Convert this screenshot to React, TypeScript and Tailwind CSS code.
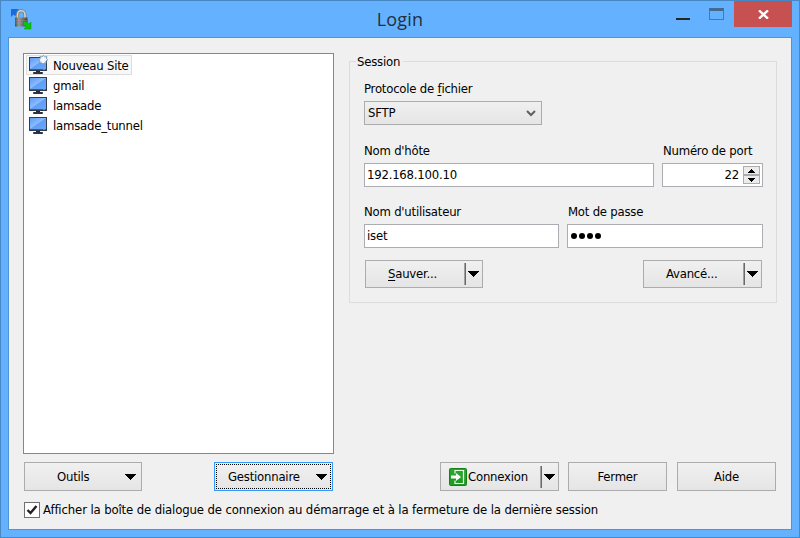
import type { ReactNode } from "react";

function Monitor({ star = false }: { star?: boolean }) {
  return (
    <svg width="20" height="20" viewBox="0 0 20 20" className="block shrink-0">
      <defs>
        <linearGradient id="screen" x1="0" y1="0" x2="1" y2="1">
          <stop offset="0" stopColor="#5c9cf5" />
          <stop offset="0.48" stopColor="#8cbbfb" />
          <stop offset="0.52" stopColor="#5f9ff8" />
          <stop offset="1" stopColor="#68a6ff" />
        </linearGradient>
      </defs>
      <path d="M1 2h18v14H1z" fill="#343d4c" />
      <path d="M2 3h16v11H2z" fill="url(#screen)" />
      <path d="M2 14h16v1H2z" fill="#46597a" />
      <path d="M15 14h2v1h-2z" fill="#20d020" />
      <path d="M8 16h4v1H8z" fill="#252a33" />
      <path d="M5.500 17.500h9v1h-9z" fill="#4e6079" stroke="#2c3442" />
      {star && (
        <path
          d="M15.400.3l1.200 1.800 2.300-.8-.4 2.300 1.300 1.300-1.900 1.100.2 2.200-1.900-.3-1.300 1.400-1.100-1.500-2.200.2.500-2.100-1.400-1.300 1.700-1.100-.5-2.200 2.200.7z"
          fill="#f4faff"
          stroke="#7592ad"
          strokeWidth=".8"
        />
      )}
    </svg>
  );
}

function AppIcon() {
  return (
    <svg width="22" height="22" viewBox="0 0 22 22" className="block">
      <defs>
        <linearGradient id="lock" x1="0" y1="0" x2="1" y2="0">
          <stop offset="0" stopColor="#4a4a4a" />
          <stop offset=".3" stopColor="#989898" />
          <stop offset=".65" stopColor="#6a6a6a" />
          <stop offset="1" stopColor="#3a3a3a" />
        </linearGradient>
      </defs>
      <path d="M1 1h8L6.500 3.500 8 5 5 8 3.500 6.500 1 9z" fill="#176be0" />
      <path d="M7.500 10V6.500a3.500 3.500 0 0 1 7.500 0V10" fill="none" stroke="#777" strokeWidth="3" />
      <path d="M7.500 10V6.500a3.500 3.500 0 0 1 7.500 0V10" fill="none" stroke="#d8d4d0" strokeWidth="1.600" />
      <path d="M5 9.500h12.500v9H5z" fill="url(#lock)" />
      <path d="M5 10h12.500M5 12.500h12M5 15h12" stroke="#a2a2a2" strokeWidth=".6" opacity=".6" />
      <path d="M13.500 13.500h3l2.500 2.500 2-2v7h-7l2-2-2.500-2.500z" fill="#09c510" stroke="#079b0c" strokeWidth=".5" />
    </svg>
  );
}

function Down() {
  return (
    <svg width="11" height="6" viewBox="0 0 11 6" shapeRendering="crispEdges" className="block">
      <path d="M0 0h11v1h-1v1H9v1H8v1H7v1H6v1H5V5H4V4H3V3H2V2H1V1H0z" fill="#000" />
    </svg>
  );
}

function Spin({ up = false }: { up?: boolean }) {
  return (
    <div className="flex h-[9px] w-[17px] items-center justify-center border border-[#acacac] bg-[#ececec]">
      <svg width="7" height="4" viewBox="0 0 7 4" shapeRendering="crispEdges" className={up ? "block rotate-180" : "block"}>
        <path d="M0 0h7v1H6v1H5v1H4v1H3V3H2V2H1V1H0z" />
      </svg>
    </div>
  );
}

function Button({ className, text, children, drop, split }: { className: string; text: string; children: ReactNode; drop?: string; split?: boolean }) {
  return (
    <button className={`flex shrink-0 items-center border border-[#acacac] bg-linear-to-b from-[#f0f0f0] to-[#e5e5e5] text-left ${className}`}>
      <span className={`flex shrink-0 items-center ${text}`}>{children}</span>
      {split && <span className="h-[22px] w-[2px] shrink-0 border-r border-[#696969] bg-[#a0a0a0]" />}
      {drop && <span className={drop}><Down /></span>}
    </button>
  );
}

const sites = ["gmail", "lamsade", "lamsade_tunnel"];

export default function App() {
  return (
    <div className="flex h-[538px] w-[800px] flex-col border border-[#4787c2] bg-[#64b2ff] font-['DejaVu_Sans_Condensed','DejaVu_Sans',sans-serif] text-[13px] leading-[16px] tracking-[-0.22px] text-black [font-stretch:condensed]">
      <header className="flex h-[36px] shrink-0">
        <div className="w-[220px] pt-[7px] pl-[9px]"><AppIcon /></div>
        <h1 className="w-[358px] pt-[6px] text-center font-['Open_Sans','Noto_Sans',sans-serif] text-[18px] leading-[24px] tracking-[0.2px] text-[#22303c] [font-stretch:normal]">Login</h1>
        <div className="flex grow justify-end pr-[7px]">
          <span className="mt-[17px] mr-[19px] h-[2px] w-[14px] bg-[#252525]" />
          <span className="mt-[7px] mr-[10px] h-[12px] w-[15px] border border-t-3 border-[#447aac] border-t-[#436b91]" />
          <span className="flex h-[26px] w-[58px] items-center justify-center bg-[#c75050]">
            <svg width="11" height="9" viewBox="0 0 11 9"><path d="M1 .3l9 8.400M10 .3l-9 8.400" stroke="#fff" strokeWidth="2.300" /></svg>
          </span>
        </div>
      </header>
      <main className="mx-[7px] h-[493px] border border-[#5094d5] bg-[#f0f0f0] pt-[15px] pl-[14px]">
        <div className="flex gap-[15px]">
          <div className="h-[401px] w-[311px] border border-[#828790] bg-white pt-px pl-[2px]">
            <div className="flex h-[20px] w-[106px] items-center border border-[#dedede] bg-[#f7f7f7] pl-px">
              <Monitor star /><span className="pt-px pl-[5px] whitespace-nowrap">Nouveau Site</span>
            </div>
            {sites.map((site) => (
              <div key={site} className="flex h-[20px] items-center pl-[2px]"><Monitor /><span className="pt-px pl-[5px]">{site}</span></div>
            ))}
          </div>
          <section className="mt-[8px] h-[242px] w-[428px] border border-[#dcdcdc] pl-[14px] whitespace-nowrap">
            <h2 className="-mt-[8px] -ml-[8px] w-[47px] bg-[#f0f0f0] pl-px">Session</h2>
            <div className="pt-[11px]">Protocole de <u className="underline-offset-2">f</u>ichier</div>
            <div className="mt-[4px] flex h-[24px] w-[178px] items-center justify-between border border-[#acacac] bg-linear-to-b from-[#f0f0f0] to-[#e5e5e5] pr-[5px] pl-[3px]">
              SFTP
              <svg width="10" height="7" viewBox="0 0 10 7"><path d="M1 1l4 4 4-4" fill="none" stroke="#606060" strokeWidth="2" /></svg>
            </div>
            <div className="mt-[18px] flex gap-[8px]">
              <div className="w-[290px]"><div>Nom d'hôte</div><div className="mt-[4px] h-[24px] border border-[#abadb3] bg-white pt-[3px] pl-[2px]">192.168.100.10</div></div>
              <div className="w-[101px]">
                <div className="pl-px">Numéro de port</div>
                <div className="mt-[4px] flex h-[24px] items-center justify-end border border-[#abadb3] bg-white pr-[2px]">
                  <span className="pr-[4px]">22</span><div className="flex flex-col"><Spin up /><Spin /></div>
                </div>
              </div>
            </div>
            <div className="mt-[17px] flex gap-[8px]">
              <div className="w-[195px]"><div>Nom d'utilisateur</div><div className="mt-[4px] h-[24px] border border-[#abadb3] bg-white pt-[3px] pl-[2px]">iset</div></div>
              <div className="w-[196px]">
                <div className="pl-px">Mot de passe</div>
                <div className="mt-[4px] flex h-[24px] items-center gap-[2px] border border-[#abadb3] bg-white pl-[3px]">
                  {[0, 1, 2, 3].map((n) => <span key={n} className="size-[6px] rounded-full bg-black" />)}
                </div>
              </div>
            </div>
            <div className="mt-[12px] flex gap-[160px] pl-px">
              <Button className="h-[28px] w-[118px]" text="w-[98px] pl-[22px]" split drop="pl-[2px]"><span><u className="underline-offset-2">S</u>auver...</span></Button>
              <Button className="h-[28px] w-[119px]" text="w-[99px] pl-[22px]" split drop="pl-[2px]">Avancé...</Button>
            </div>
          </section>
        </div>
        <div className="mt-[8px] flex h-[29px] pl-px">
          <Button className="h-[29px] w-[118px]" text="w-[100px] pl-[32px]" drop="pl-0">Outils</Button>
          <button className="ml-[72px] h-[29px] w-[119px] border border-[#3399ff] bg-linear-to-b from-[#f0f0f0] to-[#e5e5e5] p-px">
            <span className="flex h-full items-center justify-between border border-dotted border-black pr-[3px] pl-[11px]"><span>Gestionnaire</span><Down /></span>
          </button>
          <Button className="ml-[107px] h-[29px] w-[119px]" text="w-[99px] pl-[8px]" split drop="pl-[2px]">
            <svg width="18" height="18" viewBox="0 0 18 18" className="mr-px block shrink-0">
              <rect x=".5" y=".5" width="17" height="17" rx="1" fill="#2ba32d" stroke="#168019" />
              <path d="M1 17V9l16 3v5z" fill="#118b14" opacity=".35" />
              <path d="M6 5.500v-3h8.500v13H6v-3" fill="none" stroke="#e4ffe4" strokeWidth="1.200" />
              <path d="M2 7.500h5V5l5 4-5 4v-2.500H2z" fill="#fff" />
            </svg>Connexion
          </Button>
          <Button className="ml-[9px] h-[29px] w-[99px]" text="w-full justify-center">Fermer</Button>
          <Button className="ml-[10px] h-[29px] w-[99px]" text="w-full justify-center">Aide</Button>
        </div>
        <label className="mt-[10px] flex items-center pl-px">
          <span className="flex size-[16px] items-center justify-center border border-[#707070] bg-white">
            <svg width="12" height="10" viewBox="0 0 12 10"><path d="M1.500 5l3 3L10.500 1" fill="none" stroke="#212121" strokeWidth="2.400" /></svg>
          </span>
          <span className="pt-px pl-[3px] tracking-[-0.13px] whitespace-nowrap">Afficher la boîte de dialogue de connexion au démarrage et à la fermeture de la dernière session</span>
        </label>
      </main>
    </div>
  );
}
